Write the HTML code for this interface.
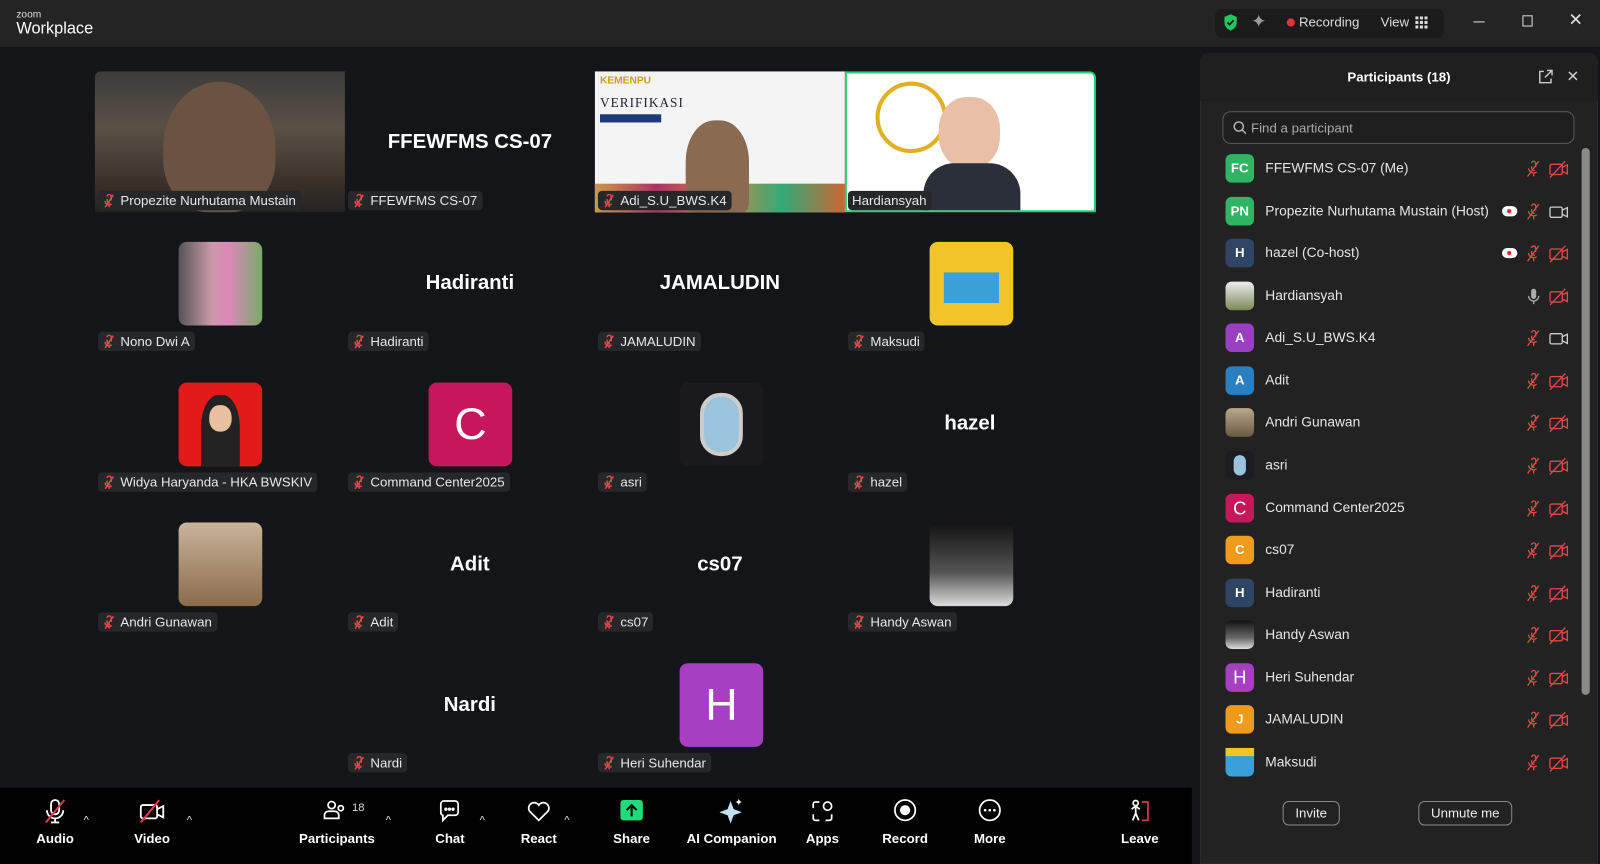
<!DOCTYPE html>
<html><head><meta charset="utf-8"><style>
*{margin:0;padding:0;box-sizing:border-box}
body{width:1600px;height:847px;background:#131518;font-family:"Liberation Sans",sans-serif;color:#fff;position:relative;overflow:hidden}
#w{position:absolute;left:0;top:0;width:1568px;height:830px;transform:scale(1.0204);transform-origin:0 0}
.a{position:absolute}
.top{left:0;top:0;width:1568px;height:46px;background:#242424}
.nm{position:absolute;font-weight:bold;font-size:20px;text-align:center;width:245px}
.lb{position:absolute;height:19px;background:#262729;border-radius:4px;font-size:13px;line-height:19px;padding:0 5px 0 4px;color:#e8e8e8;white-space:nowrap}
.lb svg{vertical-align:-3px;margin-right:4px}
.sq{position:absolute;width:82px;height:82px;border-radius:8px;font-size:44px;text-align:center;line-height:82px;color:#fff}
.tb{position:absolute;top:772px;font-size:13px;font-weight:bold;text-align:center;color:#fff;white-space:nowrap}
.tb svg{display:block;margin:0 auto 6px}
.car{position:absolute;top:798px;font-size:11px;color:#ddd}
.pr{position:absolute;left:1200px;height:30px;width:345px}
.av{position:absolute;left:1px;top:0;width:28px;height:28px;border-radius:6px;font-size:13px;font-weight:bold;text-align:center;line-height:28px}
.pn{position:absolute;left:40px;top:6px;font-size:13.5px;color:#e6e6e6;white-space:nowrap}
.mi{position:absolute;left:294px;top:6px}
.ca{position:absolute;left:318px;top:6px}
.rc{position:absolute;left:272px;top:9px;width:15px;height:10px;background:#fff;border-radius:6px}
.rc:after{content:"";position:absolute;left:5px;top:3px;width:4px;height:4px;border-radius:50%;background:#e02828}
</style></head><body><div id="w">
<div class="a top"></div>
<div class="a" style="left:16px;top:9px;font-size:10px;color:#ddd">zoom</div>
<div class="a" style="left:16px;top:20px;font-size:16px;color:#fff">Workplace</div>
<div class="a" style="left:1191px;top:9px;width:224px;height:28px;background:#1b1b1b;border-radius:6px"></div>
<svg class="a" style="left:1198px;top:13px" width="16" height="18" viewBox="0 0 16 18"><path d="M8 1L14 3.5V9c0 4-3 6.5-6 8-3-1.5-6-4-6-8V3.5z" fill="#22c55e"/><path d="M5 9l2 2 4-4" stroke="#111" stroke-width="1.8" fill="none"/></svg>
<div class="a" style="left:1226px;top:11px;color:#999;font-size:18px">✦</div>
<div class="a" style="left:1261px;top:18px;width:8px;height:8px;border-radius:50%;background:#e5323a"></div>
<div class="a" style="left:1273px;top:14px;font-size:13px;color:#ddd">Recording</div>
<div class="a" style="left:1353px;top:14px;font-size:13px;color:#ddd">View</div>
<svg class="a" style="left:1387px;top:16px" width="12" height="12" viewBox="0 0 12 12" fill="#ddd"><rect x="0" y="0" width="3" height="3"/><rect x="4.5" y="0" width="3" height="3"/><rect x="9" y="0" width="3" height="3"/><rect x="0" y="4.5" width="3" height="3"/><rect x="4.5" y="4.5" width="3" height="3"/><rect x="9" y="4.5" width="3" height="3"/><rect x="0" y="9" width="3" height="3"/><rect x="4.5" y="9" width="3" height="3"/><rect x="9" y="9" width="3" height="3"/></svg>
<div class="a" style="left:1444px;top:21px;width:11px;height:1px;background:#ddd"></div>
<div class="a" style="left:1492px;top:15px;width:10px;height:11px;border:1.3px solid #ddd"></div>
<div class="a" style="left:1537px;top:10px;font-size:17px;color:#ddd">✕</div>

<div class="a" style="left:93px;top:70px;width:245px;height:138px;background:linear-gradient(180deg,#3c3c3a,#5a5046 40%,#3a3028 80%,#222);border-radius:6px 0 0 0"></div>
<div class="a" style="left:160px;top:80px;width:110px;height:128px;border-radius:50% 50% 40% 40%;background:#6a5342"></div>
<div class="nm" style="left:338px;top:128px">FFEWFMS CS-07</div>
<div class="a" style="left:583px;top:70px;width:245px;height:138px;background:#f4f4f4"></div>
<div class="a" style="left:588px;top:74px;font-size:10px;font-weight:bold;color:#c7a020">KEMENPU</div>
<div class="a" style="left:588px;top:93px;font-size:13px;color:#223;letter-spacing:1px;font-family:'Liberation Serif',serif">VERIFIKASI</div>
<div class="a" style="left:588px;top:112px;width:60px;height:8px;background:#1d3a7a"></div>
<div class="a" style="left:583px;top:180px;width:245px;height:28px;background:linear-gradient(90deg,#c94,#a36,#c84,#3a7,#c63)"></div>
<div class="a" style="left:672px;top:118px;width:62px;height:90px;border-radius:45% 45% 10% 10%;background:#8a6a50"></div>
<div class="a" style="left:828px;top:70px;width:246px;height:138px;background:#fff;border:2px solid #22d37a;border-radius:0 6px 0 0"></div>
<div class="a" style="left:858px;top:80px;width:70px;height:70px;border-radius:50%;border:4px solid #e0b020"></div>
<div class="a" style="left:920px;top:95px;width:60px;height:70px;border-radius:45%;background:#e9c0a5"></div>
<div class="a" style="left:905px;top:160px;width:95px;height:46px;background:#2b2f3a;border-radius:30px 30px 0 0"></div>

<div class="sq" style="left:175px;top:237px;background:linear-gradient(90deg,#555,#c9a 40%,#d8b 60%,#7a6)"></div>
<div class="nm" style="left:338px;top:266px">Hadiranti</div>
<div class="nm" style="left:583px;top:266px">JAMALUDIN</div>
<div class="sq" style="left:911px;top:237px;background:#f2c42a"><div class="a" style="left:14px;top:30px;width:54px;height:30px;background:#3aa0d8"></div></div>
<div class="sq" style="left:175px;top:375px;background:#e41a1a"><div class="a" style="left:22px;top:12px;width:38px;height:70px;border-radius:45% 45% 0 0;background:#222"></div><div class="a" style="left:30px;top:22px;width:22px;height:26px;border-radius:45%;background:#e8c0a0"></div></div>
<div class="sq" style="left:420px;top:375px;background:#c6175a">C</div>
<div class="sq" style="left:666px;top:375px;background:#1a1a1e"><div class="a" style="left:20px;top:10px;width:42px;height:62px;border-radius:20px;background:#9bc4dc;border:4px solid #ccc"></div></div>
<div class="nm" style="left:828px;top:404px">hazel</div>
<div class="sq" style="left:175px;top:512px;background:linear-gradient(180deg,#c9b49a,#8a6b4c)"></div>
<div class="nm" style="left:338px;top:542px">Adit</div>
<div class="nm" style="left:583px;top:542px">cs07</div>
<div class="sq" style="left:911px;top:512px;background:linear-gradient(180deg,#111,#555 60%,#ddd)"></div>
<div class="nm" style="left:338px;top:680px">Nardi</div>
<div class="sq" style="left:666px;top:650px;background:#a63fc2">H</div>

<svg width="0" height="0" style="position:absolute"><defs><g id="m"><path d="M5 2.5a2 2 0 0 1 4 0v4M5 5v2a2 2 0 0 0 3 1.7M3 7a4 4 0 0 0 6.5 3M7 11v2M3 13L11 1" stroke="#e24848" stroke-width="1.5" fill="none"/></g></defs></svg>
<div class="lb" style="left:96px;top:187px"><svg width="14" height="14"><use href="#m"/></svg>Propezite Nurhutama Mustain</div>
<div class="lb" style="left:341px;top:187px"><svg width="14" height="14"><use href="#m"/></svg>FFEWFMS CS-07</div>
<div class="lb" style="left:586px;top:187px"><svg width="14" height="14"><use href="#m"/></svg>Adi_S.U_BWS.K4</div>
<div class="lb" style="left:831px;top:187px">Hardiansyah</div>
<div class="lb" style="left:96px;top:325px"><svg width="14" height="14"><use href="#m"/></svg>Nono Dwi A</div>
<div class="lb" style="left:341px;top:325px"><svg width="14" height="14"><use href="#m"/></svg>Hadiranti</div>
<div class="lb" style="left:586px;top:325px"><svg width="14" height="14"><use href="#m"/></svg>JAMALUDIN</div>
<div class="lb" style="left:831px;top:325px"><svg width="14" height="14"><use href="#m"/></svg>Maksudi</div>
<div class="lb" style="left:96px;top:463px"><svg width="14" height="14"><use href="#m"/></svg>Widya Haryanda - HKA BWSKIV</div>
<div class="lb" style="left:341px;top:463px"><svg width="14" height="14"><use href="#m"/></svg>Command Center2025</div>
<div class="lb" style="left:586px;top:463px"><svg width="14" height="14"><use href="#m"/></svg>asri</div>
<div class="lb" style="left:831px;top:463px"><svg width="14" height="14"><use href="#m"/></svg>hazel</div>
<div class="lb" style="left:96px;top:600px"><svg width="14" height="14"><use href="#m"/></svg>Andri Gunawan</div>
<div class="lb" style="left:341px;top:600px"><svg width="14" height="14"><use href="#m"/></svg>Adit</div>
<div class="lb" style="left:586px;top:600px"><svg width="14" height="14"><use href="#m"/></svg>cs07</div>
<div class="lb" style="left:831px;top:600px"><svg width="14" height="14"><use href="#m"/></svg>Handy Aswan</div>
<div class="lb" style="left:341px;top:738px"><svg width="14" height="14"><use href="#m"/></svg>Nardi</div>
<div class="lb" style="left:586px;top:738px"><svg width="14" height="14"><use href="#m"/></svg>Heri Suhendar</div>

<div class="a" style="left:0;top:772px;width:1168px;height:75px;background:#000"></div>
<div class="tb" style="left:30px;top:782px;width:48px"><svg width="26" height="26" viewBox="0 0 26 26" fill="none" stroke="#fff" stroke-width="1.8"><rect x="9" y="2" width="8" height="14" rx="4"/><path d="M5 12a8 8 0 0 0 16 0M13 20v4M9 24h8"/><path d="M4 24L22 2" stroke="#e5324a" stroke-width="2"/></svg>Audio</div>
<div class="car" style="left:82px">^</div>
<div class="tb" style="left:125px;top:782px;width:48px"><svg width="28" height="26" viewBox="0 0 28 26" fill="none" stroke="#fff" stroke-width="1.8"><rect x="3" y="7" width="16" height="13" rx="2"/><path d="M19 11l6-3v11l-6-3"/><path d="M3 24L21 2" stroke="#e5324a" stroke-width="2"/></svg>Video</div>
<div class="car" style="left:183px">^</div>
<div class="tb" style="left:293px;top:782px;width:70px"><svg width="26" height="26" viewBox="0 0 26 26" fill="none" stroke="#fff" stroke-width="1.7"><circle cx="10" cy="7" r="3.5"/><path d="M3 20v-3a4 4 0 0 1 4-4h6a4 4 0 0 1 4 4v3z"/><circle cx="19" cy="10" r="2.5"/></svg>Participants</div>
<div class="a" style="left:345px;top:786px;font-size:11px;color:#ddd">18</div>
<div class="car" style="left:378px">^</div>
<div class="tb" style="left:420px;top:782px;width:42px"><svg width="26" height="26" viewBox="0 0 26 26" fill="none" stroke="#fff" stroke-width="1.7"><path d="M4 6a3 3 0 0 1 3-3h11a3 3 0 0 1 3 3v8a3 3 0 0 1-3 3H11l-5 5v-5a3 3 0 0 1-2-3z"/><circle cx="9" cy="11" r=".8" fill="#fff"/><circle cx="12.5" cy="11" r=".8" fill="#fff"/><circle cx="16" cy="11" r=".8" fill="#fff"/></svg>Chat</div>
<div class="car" style="left:470px">^</div>
<div class="tb" style="left:505px;top:782px;width:46px"><svg width="26" height="26" viewBox="0 0 26 26" fill="none" stroke="#fff" stroke-width="1.7"><path d="M13 22L4 13a5 5 0 0 1 9-6 5 5 0 0 1 9 6z"/></svg>React</div>
<div class="car" style="left:553px">^</div>
<div class="tb" style="left:598px;top:782px;width:42px"><svg width="26" height="26" viewBox="0 0 26 26"><rect x="2" y="2" width="22" height="20" rx="3" fill="#1fdc7a"/><path d="M13 18V7M8 12l5-5 5 5" stroke="#000" stroke-width="2" fill="none"/></svg>Share</div>
<div class="tb" style="left:670px;top:782px;width:94px"><svg width="26" height="26" viewBox="0 0 26 26"><path d="M12 3l3 8 8 3-8 3-3 8-3-8-8-3 8-3z" fill="#bfe3f0"/><path d="M20 1l1 2 2 1-2 1-1 2-1-2-2-1 2-1z" fill="#fff"/></svg>AI Companion</div>
<div class="tb" style="left:788px;top:782px;width:36px"><svg width="26" height="26" viewBox="0 0 26 26" fill="none" stroke="#fff" stroke-width="1.7"><path d="M4 10V6a2 2 0 0 1 2-2h4M4 16v4a2 2 0 0 0 2 2h4M16 22h4a2 2 0 0 0 2-2v-4"/><circle cx="18" cy="8" r="4"/></svg>Apps</div>
<div class="tb" style="left:864px;top:782px;width:46px"><svg width="26" height="26" viewBox="0 0 26 26"><circle cx="13" cy="12" r="10" fill="none" stroke="#fff" stroke-width="1.7"/><circle cx="13" cy="12" r="5" fill="#fff"/></svg>Record</div>
<div class="tb" style="left:950px;top:782px;width:40px"><svg width="26" height="26" viewBox="0 0 26 26"><circle cx="13" cy="12" r="10" fill="none" stroke="#fff" stroke-width="1.7"/><circle cx="8.5" cy="12" r="1.3" fill="#fff"/><circle cx="13" cy="12" r="1.3" fill="#fff"/><circle cx="17.5" cy="12" r="1.3" fill="#fff"/></svg>More</div>
<div class="tb" style="left:1097px;top:782px;width:40px"><svg width="26" height="26" viewBox="0 0 26 26" fill="none" stroke-width="1.7"><path d="M15 4h6v18h-6" stroke="#e5324a"/><circle cx="9" cy="5" r="2.5" stroke="#fff"/><path d="M9 8v7l-3 7M9 15l3 7M5 11l4-3 4 3" stroke="#fff"/></svg>Leave</div>

<div class="a" style="left:1176px;top:52px;width:390px;height:795px;background:#222;border-radius:8px 8px 0 0;border:1px solid #2c2c2c"></div>
<div class="a" style="left:1176px;top:52px;width:390px;height:47px;background:#1f1f1f;border-radius:8px 8px 0 0"></div>
<div class="a" style="left:1176px;top:68px;width:390px;text-align:center;font-size:13px;font-weight:bold">Participants (18)</div>
<svg class="a" style="left:1507px;top:68px" width="15" height="15" viewBox="0 0 15 15" fill="none" stroke="#ccc" stroke-width="1.4"><path d="M6 2H2v11h11V9M9 1h5v5M14 1L7 8"/></svg>
<div class="a" style="left:1535px;top:66px;font-size:15px;color:#ccc">✕</div>
<div class="a" style="left:1198px;top:109px;width:345px;height:32px;border:1px solid #5a5a5a;border-radius:8px;background:#1e1e1e"></div>
<svg class="a" style="left:1208px;top:118px" width="14" height="14" viewBox="0 0 14 14" fill="none" stroke="#bbb" stroke-width="1.4"><circle cx="6" cy="6" r="4.5"/><path d="M9.5 9.5L13 13"/></svg>
<div class="a" style="left:1226px;top:118px;font-size:13px;color:#aaa">Find a participant</div>
<div class="a" style="left:1550px;top:145px;width:8px;height:536px;background:#8a8a8a;border-radius:4px"></div>

<svg width="0" height="0" style="position:absolute"><defs>
<g id="pm"><path d="M7 3a2 2 0 0 1 4 0v4M7 6v2a2 2 0 0 0 3 1.7M4 8a5 5 0 0 0 8 3.5M9 13v3M3 16L14 1" stroke="#e24848" stroke-width="1.3" fill="none"/></g>
<g id="pc"><rect x="1" y="4" width="12" height="10" rx="1.5" stroke="#e24848" stroke-width="1.3" fill="none"/><path d="M13 7l5-2.5v9L13 11M1 17L16 1" stroke="#e24848" stroke-width="1.3" fill="none"/></g>
<g id="pcw"><rect x="1" y="4" width="12" height="10" rx="1.5" stroke="#ccc" stroke-width="1.3" fill="none"/><path d="M13 7l5-2.5v9L13 11" stroke="#ccc" stroke-width="1.3" fill="none"/></g>
<g id="pmw"><rect x="6.5" y="1" width="5" height="10" rx="2.5" fill="#aaa"/><path d="M4 8a5 5 0 0 0 10 0M9 13v3" stroke="#aaa" stroke-width="1.3" fill="none"/></g>
</defs></svg>

<div class="pr" style="top:151px"><div class="av" style="background:#2fb463">FC</div><div class="pn">FFEWFMS CS-07 (Me)</div><svg class="mi" width="18" height="18"><use href="#pm"/></svg><svg class="ca" width="20" height="18"><use href="#pc"/></svg></div>
<div class="pr" style="top:193px"><div class="av" style="background:#2fb463">PN</div><div class="pn">Propezite Nurhutama Mustain (Host)</div><div class="rc"></div><svg class="mi" width="18" height="18"><use href="#pm"/></svg><svg class="ca" width="20" height="18"><use href="#pcw"/></svg></div>
<div class="pr" style="top:234px"><div class="av" style="background:#2e4565">H</div><div class="pn">hazel (Co-host)</div><div class="rc"></div><svg class="mi" width="18" height="18"><use href="#pm"/></svg><svg class="ca" width="20" height="18"><use href="#pc"/></svg></div>
<div class="pr" style="top:276px"><div class="av" style="background:linear-gradient(180deg,#eee,#7a8a5a)"></div><div class="pn">Hardiansyah</div><svg class="mi" width="18" height="18"><use href="#pmw"/></svg><svg class="ca" width="20" height="18"><use href="#pc"/></svg></div>
<div class="pr" style="top:317px"><div class="av" style="background:#9a3fbf">A</div><div class="pn">Adi_S.U_BWS.K4</div><svg class="mi" width="18" height="18"><use href="#pm"/></svg><svg class="ca" width="20" height="18"><use href="#pcw"/></svg></div>
<div class="pr" style="top:359px"><div class="av" style="background:#2a7fc1">A</div><div class="pn">Adit</div><svg class="mi" width="18" height="18"><use href="#pm"/></svg><svg class="ca" width="20" height="18"><use href="#pc"/></svg></div>
<div class="pr" style="top:400px"><div class="av" style="background:linear-gradient(180deg,#b9a88a,#6a5a44)"></div><div class="pn">Andri Gunawan</div><svg class="mi" width="18" height="18"><use href="#pm"/></svg><svg class="ca" width="20" height="18"><use href="#pc"/></svg></div>
<div class="pr" style="top:442px"><div class="av" style="background:#1c1c22"><div class="a" style="left:8px;top:4px;width:12px;height:20px;border-radius:6px;background:#9bc4dc"></div></div><div class="pn">asri</div><svg class="mi" width="18" height="18"><use href="#pm"/></svg><svg class="ca" width="20" height="18"><use href="#pc"/></svg></div>
<div class="pr" style="top:484px"><div class="av" style="background:#c6175a;font-weight:normal;font-size:18px">C</div><div class="pn">Command Center2025</div><svg class="mi" width="18" height="18"><use href="#pm"/></svg><svg class="ca" width="20" height="18"><use href="#pc"/></svg></div>
<div class="pr" style="top:525px"><div class="av" style="background:#f09a1c">C</div><div class="pn">cs07</div><svg class="mi" width="18" height="18"><use href="#pm"/></svg><svg class="ca" width="20" height="18"><use href="#pc"/></svg></div>
<div class="pr" style="top:567px"><div class="av" style="background:#2e4565">H</div><div class="pn">Hadiranti</div><svg class="mi" width="18" height="18"><use href="#pm"/></svg><svg class="ca" width="20" height="18"><use href="#pc"/></svg></div>
<div class="pr" style="top:608px"><div class="av" style="background:linear-gradient(180deg,#111,#666 60%,#ddd)"></div><div class="pn">Handy Aswan</div><svg class="mi" width="18" height="18"><use href="#pm"/></svg><svg class="ca" width="20" height="18"><use href="#pc"/></svg></div>
<div class="pr" style="top:650px"><div class="av" style="background:#a63fc2;font-weight:normal;font-size:18px">H</div><div class="pn">Heri Suhendar</div><svg class="mi" width="18" height="18"><use href="#pm"/></svg><svg class="ca" width="20" height="18"><use href="#pc"/></svg></div>
<div class="pr" style="top:691px"><div class="av" style="background:#f09a1c">J</div><div class="pn">JAMALUDIN</div><svg class="mi" width="18" height="18"><use href="#pm"/></svg><svg class="ca" width="20" height="18"><use href="#pc"/></svg></div>
<div class="pr" style="top:733px"><div class="av" style="background:#3aa0d8"><div class="a" style="left:0;top:0;width:28px;height:8px;background:#f2c42a"></div></div><div class="pn">Maksudi</div><svg class="mi" width="18" height="18"><use href="#pm"/></svg><svg class="ca" width="20" height="18"><use href="#pc"/></svg></div>

<div class="a" style="left:1257px;top:785px;width:56px;height:24px;border:1px solid #888;border-radius:6px;font-size:13px;text-align:center;line-height:22px;color:#eee">Invite</div>
<div class="a" style="left:1390px;top:785px;width:92px;height:24px;border:1px solid #888;border-radius:6px;font-size:13px;text-align:center;line-height:22px;color:#eee">Unmute me</div>
</div></body></html>
